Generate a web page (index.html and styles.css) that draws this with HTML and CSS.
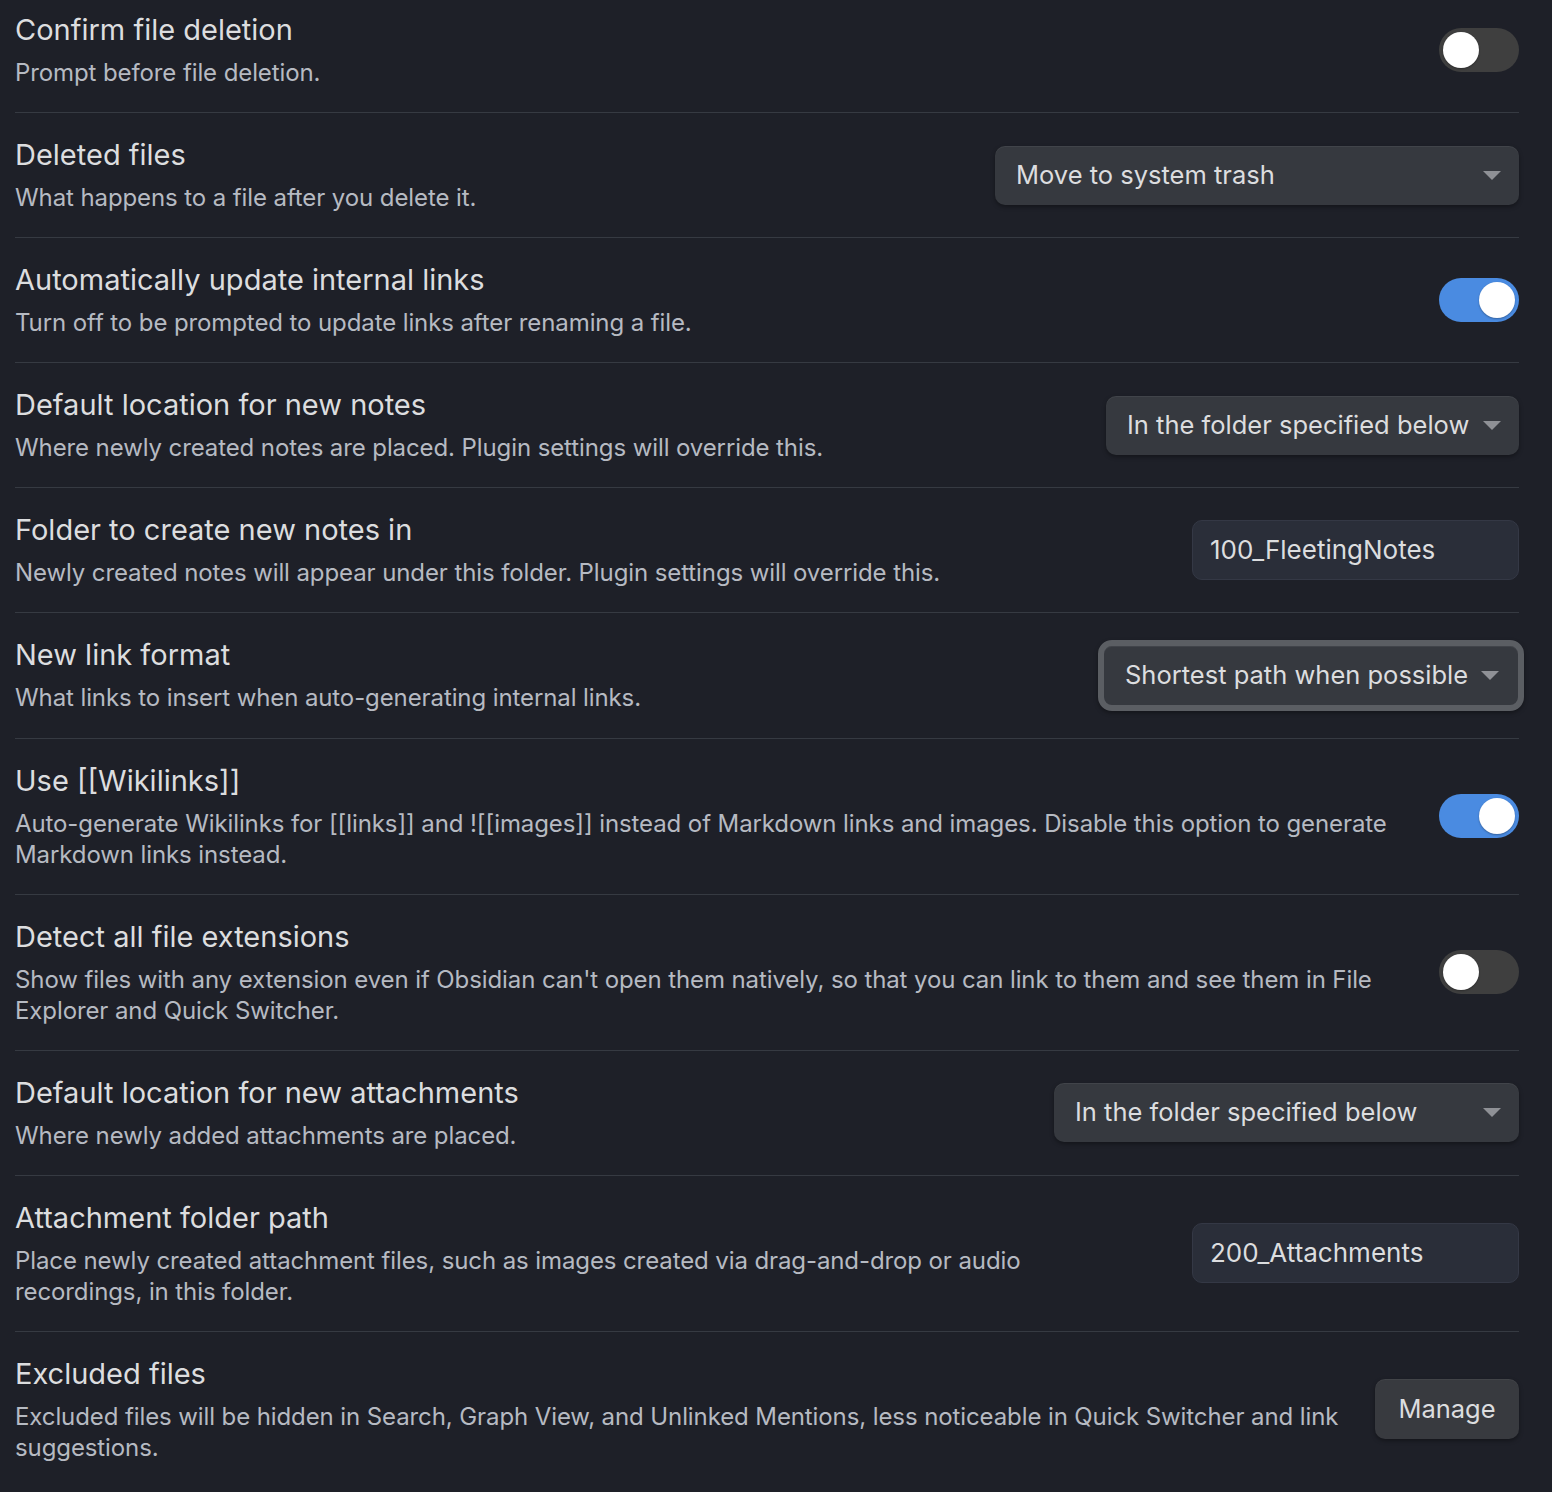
FILE: index.html
```html
<!DOCTYPE html>
<html lang="en">
<head>
<meta charset="utf-8">
<title>Files and links</title>
<link rel="stylesheet" href="styles.css">
</head>
<body>
<div class="settings">
  <div class="item first">
    <div class="info">
      <div class="name">Confirm file deletion</div>
      <div class="desc">Prompt before file deletion.</div>
    </div>
    <div class="control"><div class="toggle"></div></div>
  </div>
  <div class="item">
    <div class="info">
      <div class="name">Deleted files</div>
      <div class="desc">What happens to a file after you delete it.</div>
    </div>
    <div class="control"><div class="dropdown w-trash">Move to system trash</div></div>
  </div>
  <div class="item">
    <div class="info">
      <div class="name">Automatically update internal links</div>
      <div class="desc">Turn off to be prompted to update links after renaming a file.</div>
    </div>
    <div class="control"><div class="toggle on"></div></div>
  </div>
  <div class="item">
    <div class="info">
      <div class="name">Default location for new notes</div>
      <div class="desc">Where newly created notes are placed. Plugin settings will override this.</div>
    </div>
    <div class="control"><div class="dropdown w-notes">In the folder specified below</div></div>
  </div>
  <div class="item">
    <div class="info">
      <div class="name">Folder to create new notes in</div>
      <div class="desc">Newly created notes will appear under this folder. Plugin settings will override this.</div>
    </div>
    <div class="control"><div class="input">100_FleetingNotes</div></div>
  </div>
  <div class="item">
    <div class="info">
      <div class="name">New link format</div>
      <div class="desc">What links to insert when auto-generating internal links.</div>
    </div>
    <div class="control"><div class="dropdown focused">Shortest path when possible</div></div>
  </div>
  <div class="item">
    <div class="info">
      <div class="name">Use [[Wikilinks]]</div>
      <div class="desc">Auto-generate Wikilinks for [[links]] and ![[images]] instead of Markdown links and images. Disable this option to generate Markdown links instead.</div>
    </div>
    <div class="control"><div class="toggle on"></div></div>
  </div>
  <div class="item">
    <div class="info">
      <div class="name">Detect all file extensions</div>
      <div class="desc">Show files with any extension even if Obsidian can't open them natively, so that you can link to them and see them in File Explorer and Quick Switcher.</div>
    </div>
    <div class="control"><div class="toggle"></div></div>
  </div>
  <div class="item">
    <div class="info">
      <div class="name">Default location for new attachments</div>
      <div class="desc">Where newly added attachments are placed.</div>
    </div>
    <div class="control"><div class="dropdown w-attach">In the folder specified below</div></div>
  </div>
  <div class="item">
    <div class="info">
      <div class="name">Attachment folder path</div>
      <div class="desc">Place newly created attachment files, such as images created via drag-and-drop or audio recordings, in this folder.</div>
    </div>
    <div class="control"><div class="input">200_Attachments</div></div>
  </div>
  <div class="item">
    <div class="info">
      <div class="name">Excluded files</div>
      <div class="desc">Excluded files will be hidden in Search, Graph View, and Unlinked Mentions, less noticeable in Quick Switcher and link suggestions.</div>
    </div>
    <div class="control"><div class="button">Manage</div></div>
  </div>
</div>
</body>
</html>
```
FILE: styles.css
```css
html, body {
  margin: 0;
  padding: 0;
  background: #1e2028;
}
body {
  font-family: Inter, "Noto Sans", sans-serif;
  color: #dadada;
  width: 1552px;
  height: 1492px;
  overflow: hidden;
}
.settings {
  padding: 0 33px 0 15px;
}
.item {
  display: flex;
  align-items: center;
  border-top: 1px solid #363a42;
  padding: 24.05px 0;
}
.item.first {
  border-top: none;
  padding-top: 12px;
}
.info {
  flex: 1 1 auto;
  margin-right: 30px;
}
.name {
  font-size: 29px;
  line-height: 36px;
  color: #dcdddf;
  margin-bottom: 9px;
}
.desc {
  font-size: 24px;
  line-height: 31px;
  letter-spacing: -0.1px;
  color: #b6bac2;
}
.control {
  flex: 0 0 auto;
  display: flex;
  justify-content: flex-end;
}
.toggle {
  position: relative;
  width: 80px;
  height: 44px;
  border-radius: 22px;
  background: #3f3f3f;
}
.toggle::after {
  content: "";
  position: absolute;
  top: 4px;
  left: 4px;
  width: 36px;
  height: 36px;
  border-radius: 50%;
  background: #ffffff;
  box-shadow: 0 1px 2px rgba(0,0,0,0.3);
}
.toggle.on {
  background: #4a8be1;
}
.toggle.on::after {
  left: 40px;
}
.dropdown {
  position: relative;
  box-sizing: border-box;
  height: 59px;
  line-height: 57px;
  padding: 0 50px 0 21px;
  border-radius: 10px;
  background: #36393f;
  color: #dcdddf;
  font-size: 25.5px;
  white-space: nowrap;
  box-shadow: 0 2px 4px rgba(0,0,0,0.35), inset 0 1px 0 rgba(255,255,255,0.06);
}
.dropdown::after {
  content: "";
  position: absolute;
  right: 18px;
  top: 25px;
  border-left: 9px solid transparent;
  border-right: 9px solid transparent;
  border-top: 9px solid #8f9196;
}
.w-trash {
  width: 524px;
}
.w-notes {
  width: 413px;
}
.w-attach {
  width: 465px;
}
.dropdown.focused {
  width: 426px;
  height: 71px;
  line-height: 58px;
  padding-left: 21px;
  border: 6px solid #5b5e63;
  border-radius: 14px;
  margin-right: -5px;
}
.dropdown.focused::after {
  top: 25px;
  right: 19px;
}
.input {
  box-sizing: border-box;
  width: 327px;
  height: 60px;
  line-height: 58px;
  margin-left: 16px;
  padding: 0 17px;
  border: 1px solid #343845;
  border-radius: 10px;
  background: #2a2e39;
  color: #dcdddf;
  font-size: 26px;
}
.button {
  box-sizing: border-box;
  width: 144px;
  height: 60px;
  line-height: 60px;
  text-align: center;
  border-radius: 10px;
  background: #383a3f;
  color: #dcdddf;
  font-size: 25.5px;
  box-shadow: 0 2px 4px rgba(0,0,0,0.35), inset 0 1px 0 rgba(255,255,255,0.05);
}
```
